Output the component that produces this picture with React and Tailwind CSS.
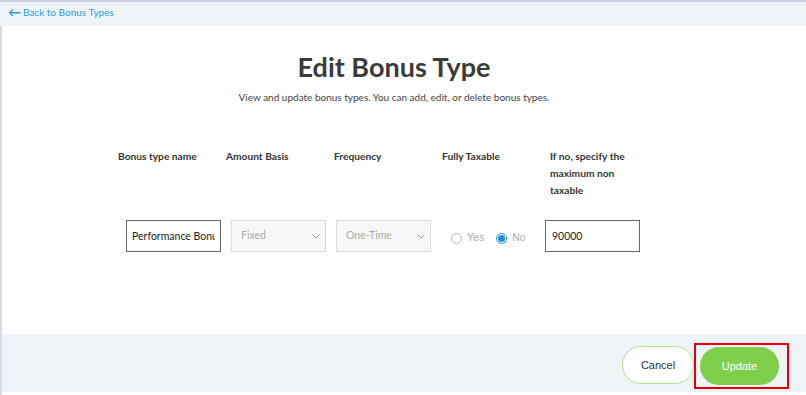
export default function App() {
  const font = { fontFamily: 'Lato, "Open Sans", sans-serif' };
  return (
    <div className="w-[806px] h-[395px] bg-white overflow-hidden flex flex-col border-t-2 border-[#c8d2e2]" style={font}>
      <div className="h-[24px] bg-[#eff3f6] flex items-start pt-[3px] pl-[8px] shrink-0">
        <a className="text-[10px] text-[#2a9fd8] flex items-center gap-[2px] leading-[14px]">
          <span className="text-[13px] font-bold leading-[14px]">←</span>
          <span>Back to Bonus Types</span>
        </a>
      </div>
      <div className="flex-1 flex flex-col border-l-2 border-[#d3ddee]">
        <div className="flex-1 flex flex-col">
          <div className="flex flex-col items-center pr-[20px] pt-[25px]">
            <h1 className="text-[27px] font-bold text-[#3b3b3b] leading-[32px]">Edit Bonus Type</h1>
            <p className="mt-[7px] text-[10px] text-[#444] leading-[14px]">View and update bonus types. You can add, edit, or delete bonus types.</p>
          </div>
          <div className="mt-[44px] w-full pl-[116px]">
            <div className="flex text-[10.2px] font-bold text-[#333] leading-[17px]">
              <div className="w-[108px]">Bonus type name</div>
              <div className="w-[108px]">Amount Basis</div>
              <div className="w-[108px]">Frequency</div>
              <div className="w-[108px]">Fully Taxable</div>
              <div className="w-[96px]">If no, specify the maximum non taxable</div>
            </div>
            <div className="flex items-center mt-[21px] pl-[8px]">
              <input
                readOnly
                value="Performance Bonus"
                className="w-[95px] h-[32px] border border-[#666] px-[5px] text-[10.5px] text-[#222] outline-none"
                style={font}
              />
              <div className="ml-[10px] w-[95px] h-[32px] border border-[#dcdcdc] bg-[#f7f7f7] flex items-center justify-between pl-[9px] pr-[5px] text-[10.5px] text-[#aaa]">
                <span>Fixed</span>
                <svg width="8" height="5" viewBox="0 0 8 5"><path d="M0.5 0.5 L4 4 L7.5 0.5" fill="none" stroke="#999" strokeWidth="1"/></svg>
              </div>
              <div className="ml-[10px] w-[95px] h-[32px] border border-[#dcdcdc] bg-[#f7f7f7] flex items-center justify-between pl-[9px] pr-[5px] text-[10.5px] text-[#aaa]">
                <span>One-Time</span>
                <svg width="8" height="5" viewBox="0 0 8 5"><path d="M0.5 0.5 L4 4 L7.5 0.5" fill="none" stroke="#999" strokeWidth="1"/></svg>
              </div>
              <div className="ml-[20px] w-[94px] flex items-center mt-[4px] text-[10.5px] text-[#aaa]" style={{ fontFamily: '"Liberation Sans", Arial, sans-serif' }}>
                <span className="w-[11px] h-[11px] rounded-full border border-[#bbb] bg-white"></span>
                <span className="ml-[5px]">Yes</span>
                <span className="ml-[12px] w-[11px] h-[11px] rounded-full border border-[#1a8fe0] bg-white flex items-center justify-center">
                  <span className="w-[7px] h-[7px] rounded-full bg-[#1a8fe0]"></span>
                </span>
                <span className="ml-[5px]">No</span>
              </div>
              <input
                readOnly
                value="90000"
                className="w-[95px] h-[32px] border border-[#666] px-[6px] text-[10.5px] text-[#222] outline-none"
                style={font}
              />
            </div>
          </div>
        </div>
        <div className="h-[58px] bg-[#eff3f6] flex items-start justify-end pr-[17px] shrink-0 mb-[3px]" style={{ fontFamily: '"Liberation Sans", Arial, sans-serif' }}>
          <button className="mt-[12px] w-[72px] h-[38px] rounded-full border border-[#b7e096] bg-white text-[11px] text-[#333]">Cancel</button>
          <div className="mt-[9px] border-2 border-[#e3000f] flex items-center h-[46px] w-[95px]">
            <button className="w-[79px] h-[38px] rounded-full bg-[#80cf4b] text-white text-[11px] ml-[4px]">Update</button>
          </div>
        </div>
      </div>
    </div>
  );
}
